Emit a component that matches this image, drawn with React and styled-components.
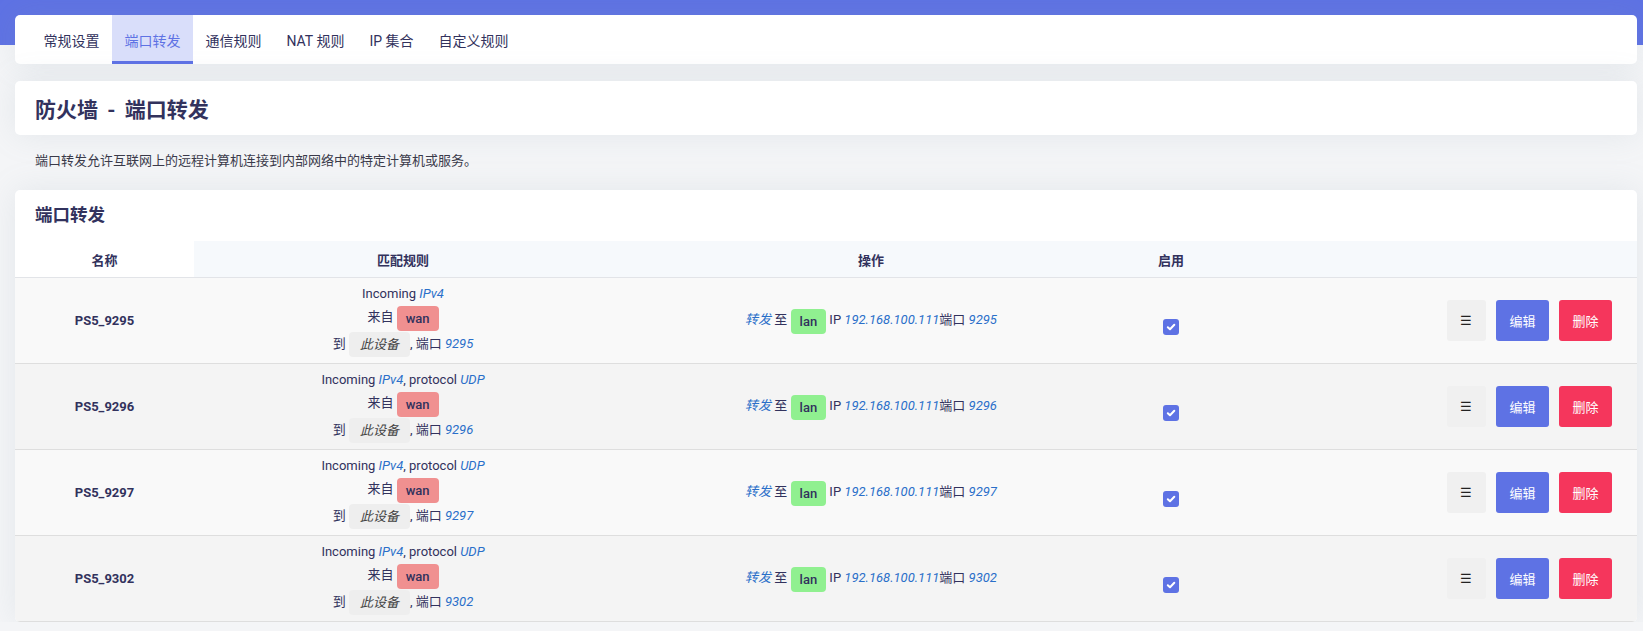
import React from "react";
import styled, { createGlobalStyle } from "styled-components";

const GlobalStyle = createGlobalStyle`
  body {
    margin: 0;
    background: #f4f5f7;
    font-family: Roboto, "Noto Sans CJK SC", sans-serif;
    color: #32325d;
  }
`;

const Band = styled.div`
  height: 45px;
  background: #5e72e4;
`;

const Main = styled.main`
  margin-top: -30px;
  padding: 0 6px 0 15px;
`;

const Card = styled.section`
  background: #fff;
  border-radius: 5px;
  box-shadow: 0 0 2rem 0 rgba(136, 152, 170, 0.15);
  overflow: hidden;
`;

const TabBar = styled(Card)`
  display: flex;
  height: 49px;
  padding-left: 16px;
`;

const Tab = styled.div`
  display: flex;
  align-items: center;
  padding: 0 12.5px;
  font-size: 14px;
  cursor: pointer;
  color: ${(p) => (p.$active ? "#5e72e4" : "#32325d")};
  background: ${(p) => (p.$active ? "#d9defa" : "transparent")};
  box-shadow: ${(p) => (p.$active ? "inset 0 -3px 0 #5e72e4" : "none")};
`;

const TitleCard = styled(Card)`
  margin-top: 17px;
  height: 54px;
  display: flex;
  align-items: center;
  padding: 0 20px;
`;

const Title = styled.h2`
  margin: 0;
  font-size: 21px;
  font-weight: 700;
  color: #32325d;
`;

const Dash = styled.span`
  margin: 0 4px;
`;

const Desc = styled.p`
  margin: 0;
  padding: 16px 20px 19px;
  font-size: 13px;
  line-height: 20px;
  color: #3a3a4a;
`;

const SectionTitle = styled.h3`
  margin: 0;
  padding: 13px 20px;
  font-size: 17.5px;
  line-height: 25px;
  font-weight: 700;
  color: #32325d;
`;

const Table = styled.table`
  width: 100%;
  border-collapse: collapse;
  table-layout: fixed;
`;

const Th = styled.th`
  height: 36px;
  padding: 0;
  font-size: 13px;
  font-weight: 700;
  color: #32325d;
  background: ${(p) => (p.$plain ? "#fff" : "#f6f9fc")};
  border-bottom: 1px solid #e2e4e8;
`;

const Row = styled.tr`
  background: ${(p) => (p.$even ? "#f4f4f4" : "#f9f9f9")};
`;

const Td = styled.td`
  height: 85px;
  padding: 0;
  text-align: ${(p) => p.$align || "center"};
  vertical-align: middle;
  font-size: 13px;
  border-bottom: 1px solid #dedede;
  padding-right: ${(p) => (p.$align === "right" ? "25px" : "0")};
`;

const Name = styled.span`
  font-weight: 700;
  color: #32325d;
`;

const Line = styled.div`
  line-height: ${(p) => (p.$tall ? "25px" : "20px")};
  color: #32325d;
  white-space: nowrap;
`;

const Var = styled.var`
  font-style: italic;
  color: #2a6fc9;
`;

const Badge = styled.span`
  display: inline-block;
  height: 25px;
  line-height: 25px;
  padding: 0 ${(p) => p.$pad || 9}px;
  border-radius: 4px;
  background: ${(p) => p.$bg};
  font-weight: ${(p) => (p.$italic ? 400 : 500)};
  font-style: ${(p) => (p.$italic ? "italic" : "normal")};
  color: ${(p) => (p.$italic ? "#444" : "#32325d")};
  vertical-align: middle;
`;

const Check = styled.span`
  display: inline-flex;
  align-items: center;
  justify-content: center;
  width: 16px;
  height: 16px;
  margin-top: 12px;
  border-radius: 3px;
  background: #5e72e4;
`;

const Buttons = styled.div`
  display: inline-flex;
  gap: 10px;
  vertical-align: middle;
`;

const Btn = styled.button`
  height: 41px;
  padding: 0 13.5px;
  border: none;
  border-radius: 3px;
  font-family: inherit;
  font-size: 13px;
  color: ${(p) => (p.$kind === "menu" ? "#222" : "#fff")};
  background: ${(p) =>
    p.$kind === "edit" ? "#5e72e4" : p.$kind === "del" ? "#f5365c" : "#f0f0f0"};
`;

const tabs = ["常规设置", "端口转发", "通信规则", "NAT 规则", "IP 集合", "自定义规则"];

const rules = [
  { name: "PS5_9295", port: "9295", udp: false },
  { name: "PS5_9296", port: "9296", udp: true },
  { name: "PS5_9297", port: "9297", udp: true },
  { name: "PS5_9302", port: "9302", udp: true },
];

function CheckMark() {
  return (
    <svg width="10" height="10" viewBox="0 0 10 10">
      <path d="M1.8 5.2 L4 7.3 L8.3 2.8" fill="none" stroke="#fff" strokeWidth="2" strokeLinecap="round" strokeLinejoin="round" />
    </svg>
  );
}

export default function App() {
  return (
    <>
      <GlobalStyle />
      <Band />
      <Main>
        <TabBar>
          {tabs.map((t) => (
            <Tab key={t} $active={t === "端口转发"}>
              {t}
            </Tab>
          ))}
        </TabBar>

        <TitleCard>
          <Title>
            防火墙 <Dash>-</Dash> 端口转发
          </Title>
        </TitleCard>

        <Desc>端口转发允许互联网上的远程计算机连接到内部网络中的特定计算机或服务。</Desc>

        <Card>
          <SectionTitle>端口转发</SectionTitle>
          <Table>
            <colgroup>
              <col style={{ width: 179 }} />
              <col style={{ width: 418 }} />
              <col style={{ width: 518 }} />
              <col style={{ width: 82 }} />
              <col />
            </colgroup>
            <thead>
              <tr>
                <Th $plain>名称</Th>
                <Th>匹配规则</Th>
                <Th>操作</Th>
                <Th>启用</Th>
                <Th />
              </tr>
            </thead>
            <tbody>
              {rules.map((r, i) => (
                <Row key={r.name} $even={i % 2 === 1}>
                  <Td>
                    <Name>{r.name}</Name>
                  </Td>
                  <Td>
                    <Line>
                      Incoming <Var>IPv4</Var>
                      {r.udp && (
                        <>
                          , protocol <Var>UDP</Var>
                        </>
                      )}
                    </Line>
                    <Line $tall>
                      来自 <Badge $bg="#f09090">wan</Badge>
                    </Line>
                    <Line $tall>
                      到 <Badge $bg="#eeeeee" $italic $pad={11}>此设备</Badge>, 端口 <Var>{r.port}</Var>
                    </Line>
                  </Td>
                  <Td>
                    <Line $tall>
                      <Var>转发</Var> 至 <Badge $bg="#90f090">lan</Badge> IP <Var>192.168.100.111</Var>端口 <Var>{r.port}</Var>
                    </Line>
                  </Td>
                  <Td>
                    <Check>
                      <CheckMark />
                    </Check>
                  </Td>
                  <Td $align="right">
                    <Buttons>
                      <Btn $kind="menu">☰</Btn>
                      <Btn $kind="edit">编辑</Btn>
                      <Btn $kind="del">删除</Btn>
                    </Buttons>
                  </Td>
                </Row>
              ))}
            </tbody>
          </Table>
        </Card>
      </Main>
    </>
  );
}
